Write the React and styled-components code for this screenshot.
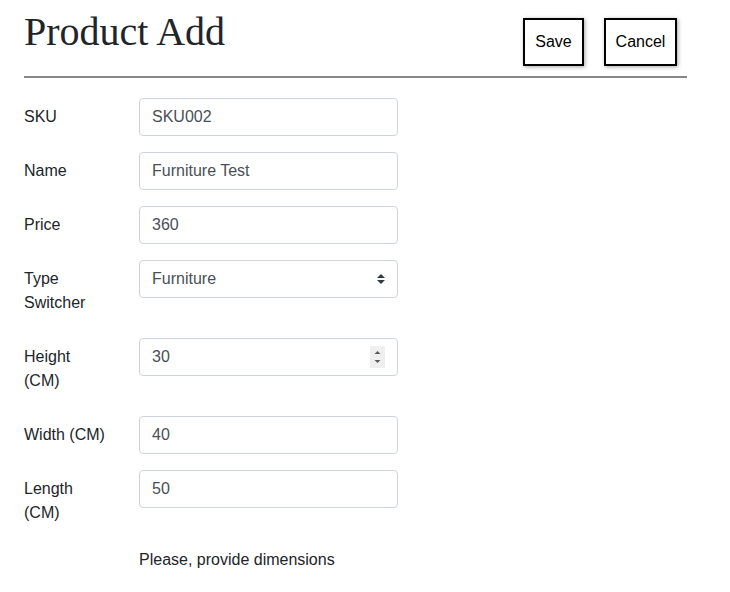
import React from "react";
import styled, { createGlobalStyle } from "styled-components";

const GlobalStyle = createGlobalStyle`
  body {
    margin: 0;
    background: #fff;
    font-family: "Liberation Sans", Arial, sans-serif;
    color: #212529;
  }
`;

const fields = [
  { id: "sku", label: "SKU", value: "SKU002" },
  { id: "name", label: "Name", value: "Furniture Test" },
  { id: "price", label: "Price", value: "360" },
  { id: "productType", label: "Type Switcher", value: "Furniture", select: true },
  { id: "height", label: "Height (CM)", value: "30", spinner: true },
  { id: "width", label: "Width (CM)", value: "40" },
  { id: "length", label: "Length (CM)", value: "50" },
];

const App = () => {
  return (
    <Page>
      <GlobalStyle />
      <Header>
        <Title>Product Add</Title>
        <Actions>
          <ActionButton type="submit" $width={61}>Save</ActionButton>
          <ActionButton type="button" $width={73}>Cancel</ActionButton>
        </Actions>
      </Header>
      <Form id="product_form">
        {fields.map((f) => (
          <Row key={f.id}>
            <Label htmlFor={f.id}>{f.label}</Label>
            <Control>
              {f.select ? (
                <>
                  <Select id={f.id} defaultValue={f.value}>
                    <option>DVD</option>
                    <option>Book</option>
                    <option>Furniture</option>
                  </Select>
                  <SelectArrow viewBox="0 0 4 5">
                    <path fill="#343a40" d="M2 0L0 2h4zm0 5L0 3h4z" />
                  </SelectArrow>
                </>
              ) : (
                <Input id={f.id} type="text" defaultValue={f.value} />
              )}
              {f.spinner && (
                <Spinner>
                  <svg width="15" height="22" viewBox="0 0 15 22">
                    <path fill="#5a5a5a" d="M4.5 8L7.5 5L10.5 8z" />
                    <path fill="#5a5a5a" d="M4.5 14L7.5 17L10.5 14z" />
                  </svg>
                </Spinner>
              )}
            </Control>
          </Row>
        ))}
        <Row>
          <Label as="span" />
          <Hint>Please, provide dimensions</Hint>
        </Row>
      </Form>
    </Page>
  );
};

export default App;

const Page = styled.div`
  width: 663px;
  margin-left: 24px;
`;

const Header = styled.header`
  display: flex;
  justify-content: space-between;
  align-items: flex-start;
  padding: 8px 10px 10px 0;
  border-bottom: 2px solid #878787;
`;

const Title = styled.h1`
  margin: 0;
  font-family: "Liberation Serif", "Times New Roman", serif;
  font-weight: 400;
  font-size: 40px;
  line-height: 48px;
  color: #212529;
`;

const Actions = styled.div`
  display: flex;
  gap: 20px;
  margin-top: 10px;
`;

const ActionButton = styled.button`
  box-sizing: border-box;
  width: ${(p) => p.$width}px;
  font-family: "Liberation Sans", Arial, sans-serif;
  font-size: 16px;
  line-height: 24px;
  color: #000;
  background: #fff;
  border: 2px solid #000;
  padding: 10px 0;
  text-align: center;
  box-shadow: 1px 1px 4px rgba(0, 0, 0, 0.35);
  cursor: pointer;
`;

const Form = styled.form`
  margin-top: 20px;
`;

const Row = styled.div`
  display: flex;
  align-items: flex-start;
  margin-bottom: 16px;
`;

const Label = styled.label`
  width: 84px;
  margin-right: 31px;
  flex-shrink: 0;
  padding: 7px 0;
  font-size: 16px;
  line-height: 24px;
  color: #212529;
`;

const Control = styled.div`
  position: relative;
  width: 259px;
`;

const fieldStyles = `
  box-sizing: border-box;
  display: block;
  width: 100%;
  height: 38px;
  padding: 6px 12px;
  font-family: "Liberation Sans", Arial, sans-serif;
  font-size: 16px;
  line-height: 24px;
  color: #495057;
  background: #fff;
  border: 1px solid #ced4da;
  border-radius: 4px;
  outline: none;
`;

const Input = styled.input`
  ${fieldStyles}
`;

const Select = styled.select`
  ${fieldStyles}
  appearance: none;
  padding-right: 28px;
`;

const SelectArrow = styled.svg`
  position: absolute;
  right: 13px;
  top: 14px;
  width: 8px;
  height: 10px;
  pointer-events: none;
`;

const Spinner = styled.span`
  position: absolute;
  right: 13px;
  top: 8px;
  width: 15px;
  height: 22px;
  background: #efefef;
  display: flex;
  pointer-events: none;
`;

const Hint = styled.p`
  margin: 0;
  font-size: 16px;
  line-height: 24px;
  color: #212529;
`;
